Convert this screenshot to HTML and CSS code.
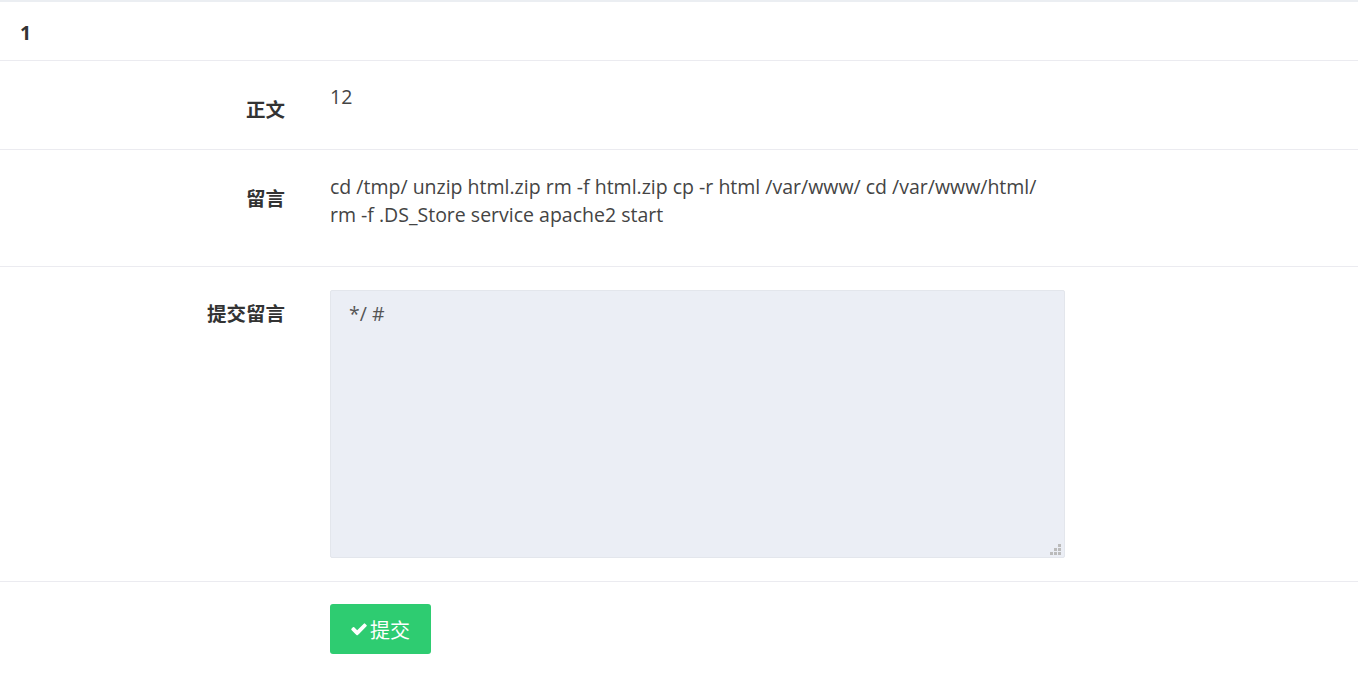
FILE: index.html
```html
<!DOCTYPE html>
<html lang="zh">
<head>
<meta charset="utf-8">
<title>留言</title>
<link rel="stylesheet" href="styles.css">
</head>
<body>
<div class="panel">
  <div class="panel-heading">1</div>
  <div class="row row-body">
    <div class="label">正文</div>
    <div class="value">12</div>
  </div>
  <div class="row row-msg">
    <div class="label">留言</div>
    <div class="value">cd /tmp/ unzip html.zip rm -f html.zip cp -r html /var/www/ cd /var/www/html/ rm -f .DS_Store service apache2 start</div>
  </div>
  <div class="row row-form">
    <div class="label">提交留言</div>
    <div class="value">
      <div class="ta-wrap">
        <textarea class="ta" id="ta" autofocus>*/ #</textarea>
        <span class="grip"></span>
      </div>
    </div>
  </div>
  <div class="row row-btn">
    <div class="label"></div>
    <div class="value">
      <button class="btn" type="button"><svg class="check" viewBox="0 0 1792 1792" width="18" height="18"><path fill="#fff" d="M1671 566q0 40-28 68l-724 724-136 136q-28 28-68 28t-68-28l-136-136-362-362q-28-28-28-68t28-68l136-136q28-28 68-28t68 28l294 295 656-657q28-28 68-28t68 28l136 136q28 28 28 68z"/></svg>提交</button>
    </div>
  </div>
</div>
<script>
var t=document.getElementById('ta');t.focus();t.setSelectionRange(t.value.length,t.value.length);
</script>
</body>
</html>
```
FILE: styles.css
```css
html, body {
  margin: 0;
  padding: 0;
  background: #fff;
}
body {
  font-family: "Open Sans", "Noto Sans CJK SC", sans-serif;
  color: #444;
  font-size: 19.5px;
  line-height: 28px;
}
.panel {
  border-top: 2px solid #ebeef2;
}
.panel-heading {
  height: 59px;
  box-sizing: border-box;
  padding: 17px 20px 0;
  font-size: 19.5px;
  font-weight: 700;
  color: #333;
  border-bottom: 1px solid #ebebf0;
}
.row {
  display: grid;
  grid-template-columns: 285px 735px;
  column-gap: 45px;
  border-bottom: 1px solid #ebebf0;
}
.label {
  text-align: right;
  font-weight: 700;
  font-size: 19.5px;
  color: #333;
  padding-top: 35px;
}
.value {
  padding-top: 22px;
}
.row-body {
  height: 89px;
  box-sizing: border-box;
}
.row-msg {
  height: 117px;
  box-sizing: border-box;
}
.row-msg .value {
  padding-top: 23px;
}
.row-form .value {
  padding: 23px 0 23px;
}
.row-form .label {
  padding-top: 33px;
}
.ta-wrap {
  position: relative;
  height: 268px;
}
.ta {
  display: block;
  box-sizing: border-box;
  width: 735px;
  height: 268px;
  margin: 0;
  padding: 9px 18px;
  border: 1px solid #e3e6ec;
  border-radius: 2px;
  background: #ebeef5;
  font-family: "Open Sans", "Noto Sans CJK SC", sans-serif;
  font-size: 19.5px;
  line-height: 28px;
  color: #555;
  resize: none;
  outline: none;
  caret-color: #333;
}
.grip {
  position: absolute;
  right: 4px;
  bottom: 3px;
  width: 11px;
  height: 11px;
  background:
    linear-gradient(#bbb, #bbb) 8px 0 / 3px 3px no-repeat,
    linear-gradient(#bbb, #bbb) 4px 4px / 3px 3px no-repeat,
    linear-gradient(#bbb, #bbb) 8px 4px / 3px 3px no-repeat,
    linear-gradient(#bbb, #bbb) 0 8px / 3px 3px no-repeat,
    linear-gradient(#bbb, #bbb) 4px 8px / 3px 3px no-repeat,
    linear-gradient(#bbb, #bbb) 8px 8px / 3px 3px no-repeat;
}
.row-btn {
  border-bottom: none;
}
.row-btn .value {
  padding: 22px 0 23px;
}
.btn {
  display: flex;
  align-items: center;
  width: 101px;
  height: 50px;
  box-sizing: border-box;
  padding: 0 0 0 20px;
  border: none;
  border-radius: 3px;
  background: #2ecc71;
  color: #fff;
  font-family: "Noto Sans CJK SC", sans-serif;
  font-size: 20px;
}
.check {
  margin-right: 2px;
}
```
